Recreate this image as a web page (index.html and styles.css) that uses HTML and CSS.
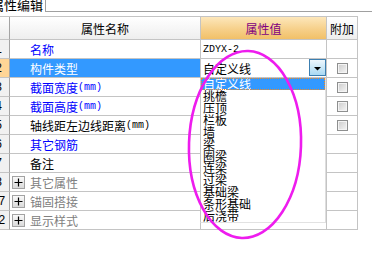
FILE: index.html
```html
<!DOCTYPE html>
<html lang="zh-CN">
<head>
<meta charset="utf-8">
<title>属性编辑</title>
<link rel="stylesheet" href="styles.css">
</head>
<body>
<div class="tabstrip">
  <div class="tab"><span class="tab-label">属性编辑</span></div>
  <div class="tabline"></div>
</div>
<div class="grid">
  <div class="cell num head"></div>
  <div class="cell head head-name">属性名称</div>
  <div class="cell head head-value">属性值</div>
  <div class="cell head head-extra">附加</div>

  <div class="cell num">1</div>
  <div class="cell name blue">名称</div>
  <div class="cell value mono">ZDYX-2</div>
  <div class="cell extra"></div>

  <div class="cell num current">2</div>
  <div class="cell name selected">构件类型</div>
  <div class="cell value combo">
    <span>自定义线</span>
    <span class="drop-btn"><svg width="15" height="15" viewBox="0 0 15 15"><polygon points="4,7 11,7 7.5,10.5" fill="#000"/></svg></span>
    <ul class="droplist">
      <li class="hl">自定义线</li>
      <li>挑檐</li>
      <li>压顶</li>
      <li>栏板</li>
      <li>墙</li>
      <li>梁</li>
      <li>圈梁</li>
      <li>连梁</li>
      <li>过梁</li>
      <li>基础梁</li>
      <li>条形基础</li>
      <li>后浇带</li>
    </ul>
  </div>
  <div class="cell extra"><span class="check"></span></div>

  <div class="cell num">3</div>
  <div class="cell name blue">截面宽度<span class="unit">(mm)</span></div>
  <div class="cell value"></div>
  <div class="cell extra"><span class="check"></span></div>

  <div class="cell num">4</div>
  <div class="cell name blue">截面高度<span class="unit">(mm)</span></div>
  <div class="cell value"></div>
  <div class="cell extra"><span class="check"></span></div>

  <div class="cell num">5</div>
  <div class="cell name">轴线距左边线距离<span class="unit">(mm)</span></div>
  <div class="cell value"></div>
  <div class="cell extra"><span class="check"></span></div>

  <div class="cell num">6</div>
  <div class="cell name blue">其它钢筋</div>
  <div class="cell value"></div>
  <div class="cell extra"></div>

  <div class="cell num">7</div>
  <div class="cell name">备注</div>
  <div class="cell value"></div>
  <div class="cell extra"></div>

  <div class="cell num">8</div>
  <div class="cell name group"><span class="expander"><svg width="11" height="11" viewBox="0 0 11 11"><path d="M1.5 5.5h8M5.5 1.5v8" stroke="#000" stroke-width="1.2"/></svg></span>其它属性</div>
  <div class="cell value"></div>
  <div class="cell extra"></div>

  <div class="cell num">17</div>
  <div class="cell name group"><span class="expander"><svg width="11" height="11" viewBox="0 0 11 11"><path d="M1.5 5.5h8M5.5 1.5v8" stroke="#000" stroke-width="1.2"/></svg></span>锚固搭接</div>
  <div class="cell value"></div>
  <div class="cell extra"></div>

  <div class="cell num">32</div>
  <div class="cell name group"><span class="expander"><svg width="11" height="11" viewBox="0 0 11 11"><path d="M1.5 5.5h8M5.5 1.5v8" stroke="#000" stroke-width="1.2"/></svg></span>显示样式</div>
  <div class="cell value"></div>
  <div class="cell extra"></div>
</div>
<svg class="annot" width="372" height="254" viewBox="0 0 372 254">
  <ellipse cx="245" cy="144.5" rx="56" ry="93.5" transform="rotate(2 245 144.5)" fill="none" stroke="#ee1cee" stroke-width="2.6"/>
</svg>
</body>
</html>
```
FILE: styles.css
```css
html, body {
  margin: 0;
  padding: 0;
}
body {
  width: 372px;
  height: 254px;
  overflow: hidden;
  background: #fff;
  position: relative;
  font-family: "Noto Sans CJK SC", "Noto Sans", sans-serif;
  font-size: 12px;
  color: #000;
}
.tabstrip {
  display: flex;
  height: 12px;
}
.tab {
  box-sizing: border-box;
  height: 12px;
  margin-left: -11px;
  padding: 0 2px;
  border-right: 1px solid #a0a0a0;
  overflow: visible;
}
.tab-label {
  display: block;
  margin-top: -2px;
  font-size: 13px;
  line-height: 13px;
  white-space: nowrap;
}
.tabline {
  flex: 1;
  box-sizing: border-box;
  height: 12px;
  border-bottom: 1px solid #a0a0a0;
}
.grid {
  display: grid;
  grid-template-columns: 22px 191px 126px 31px;
  grid-template-rows: 23px;
  grid-auto-rows: 19px;
  width: 370px;
  margin: 4px 0 0 -12px;
  border-top: 1px solid #c4c4c4;
}
.cell {
  box-sizing: border-box;
  display: flex;
  align-items: center;
  border-right: 1px solid #c4c4c4;
  border-bottom: 1px solid #c4c4c4;
  white-space: nowrap;
  min-width: 0;
}
.head {
  justify-content: center;
  background: linear-gradient(#ffffff, #eeeeee);
}
.head-value {
  color: #800080;
  background: linear-gradient(#fde7bb, #f6d08a 55%, #f1c068);
}
.num {
  justify-content: center;
  font-family: "Liberation Sans", sans-serif;
  font-size: 12px;
  background: #f1f1f1;
  border-right-color: #a4a4a4;
}
.num.head {
  background: linear-gradient(#ffffff, #ececec);
}
.num.current {
  background: #ffd596;
}
.name {
  padding-left: 20px;
}
.blue {
  color: #0000ff;
}
.selected {
  background: #3399ff;
  color: #fff;
}
.group {
  padding-left: 2px;
  color: #808080;
  gap: 5px;
}
.expander {
  box-sizing: border-box;
  width: 13px;
  height: 13px;
  border: 1px solid #a3a3a3;
  background: linear-gradient(#fafafa, #dadada);
  display: flex;
  align-items: center;
  justify-content: center;
}
.expander svg {
  display: block;
}
.unit {
  font-family: "Liberation Mono", monospace;
  font-size: 10px;
}
.value {
  padding-left: 2px;
}
.mono {
  font-family: "Liberation Mono", monospace;
  font-size: 10px;
}
.combo {
  position: relative;
  background: #fff;
}
.drop-btn {
  box-sizing: border-box;
  align-self: flex-start;
  margin-left: auto;
  width: 17px;
  height: 17px;
  border: 1px solid #3c7fb1;
  background: linear-gradient(#eef7fd, #cbe8f8 50%, #a9d9f3);
}
.drop-btn svg {
  display: block;
}
.droplist {
  position: absolute;
  left: -1px;
  top: 19px;
  box-sizing: border-box;
  width: 126px;
  margin: 0;
  padding: 0;
  list-style: none;
  background: #fff;
  border-left: 1px solid #c4c4c4;
  border-right: 1px solid #dedede;
  border-bottom: 1px solid #e2e2e2;
  z-index: 2;
}
.droplist li {
  height: 12px;
  line-height: 12px;
  font-size: 12px;
  padding-left: 2px;
  white-space: nowrap;
  overflow: visible;
}
.droplist li.hl {
  background: #3399ff;
  color: #fff;
  outline: 1px dotted #f08a24;
  outline-offset: -1px;
}
.extra {
  justify-content: center;
}
.check {
  box-sizing: border-box;
  width: 11px;
  height: 11px;
  border: 1px solid #8e8f8f;
  background: linear-gradient(135deg, #cbcbcb, #f6f6f6);
  box-shadow: inset 0 0 0 1px #f4f4f4;
}
.annot {
  position: absolute;
  left: 0;
  top: 0;
  pointer-events: none;
  z-index: 3;
}
```
